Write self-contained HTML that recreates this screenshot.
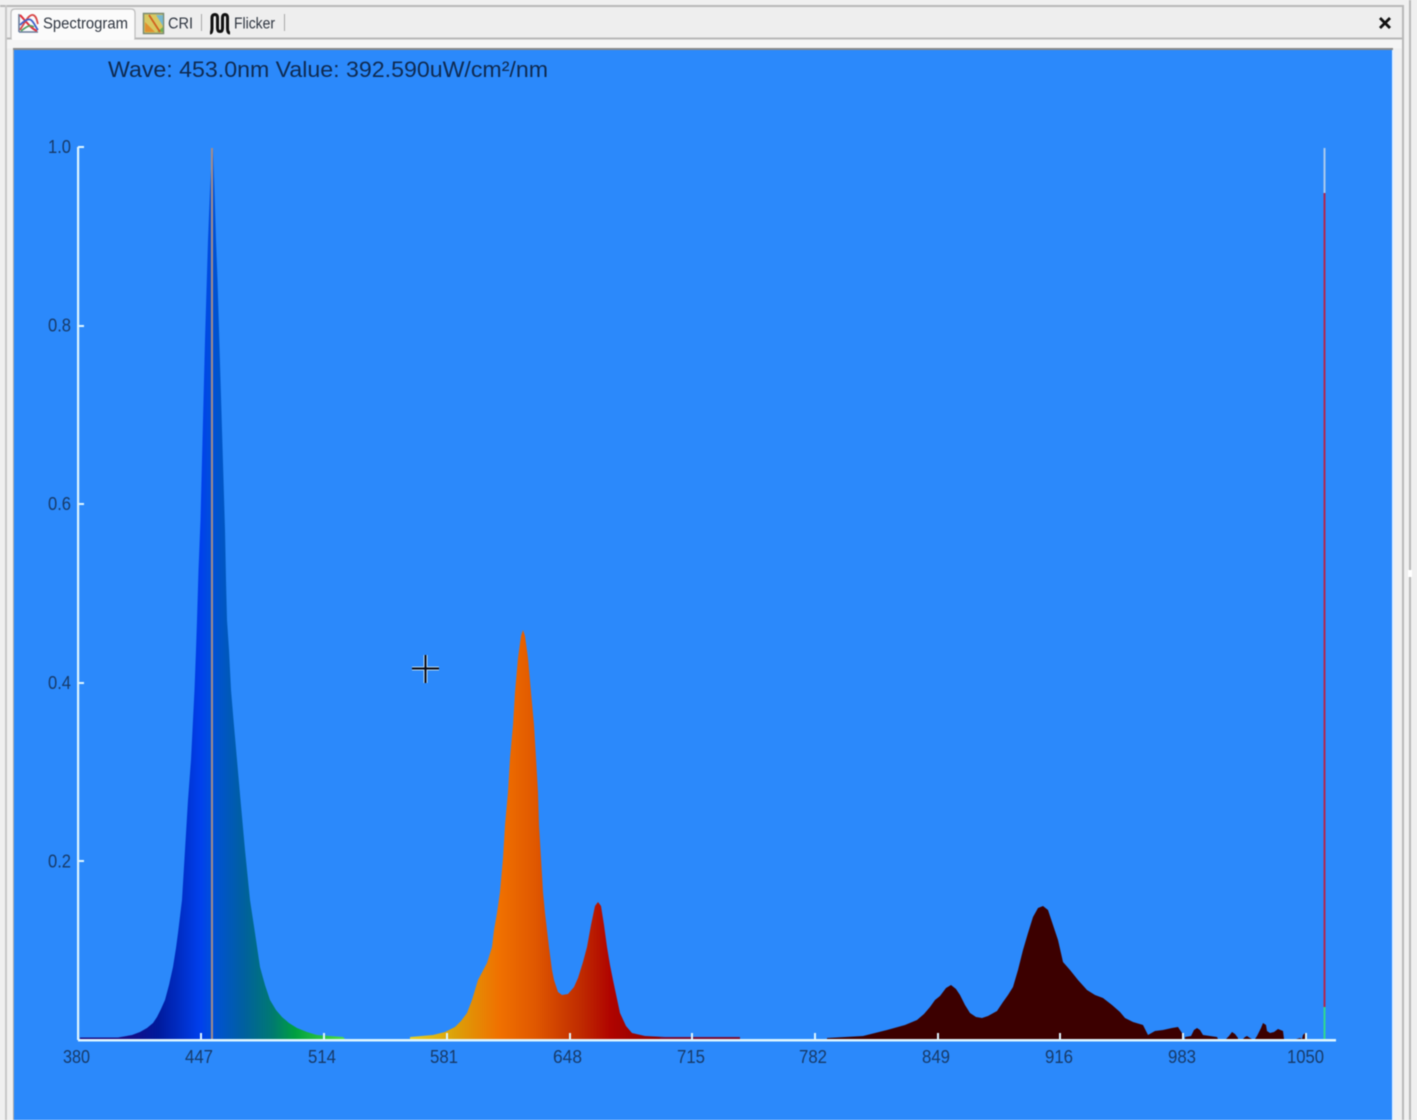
<!DOCTYPE html>
<html><head><meta charset="utf-8"><style>
html,body{margin:0;padding:0;background:#f0f0f0}
body{width:1417px;height:1120px;overflow:hidden;position:relative}
svg{position:absolute;left:0;top:0;filter:blur(.45px)}
text{font-family:"Liberation Sans",sans-serif}
.a{font-size:18.500px;fill:#173a68}
.t{font-size:15.500px;fill:#2e3540}
</style></head><body>
<svg width="1417" height="1120" viewBox="0 0 1417 1120">
<defs>
<linearGradient id="g1" gradientUnits="userSpaceOnUse" x1="120" y1="0" x2="345" y2="0">
<stop offset="0" stop-color="#1a0a80"/><stop offset=".17" stop-color="#001a9c"/><stop offset=".36" stop-color="#0040ee"/><stop offset=".41" stop-color="#0050d8"/><stop offset=".55" stop-color="#00609f"/><stop offset=".68" stop-color="#007a70"/><stop offset=".78" stop-color="#00a040"/><stop offset="1" stop-color="#50e040"/>
</linearGradient>
<linearGradient id="g2" gradientUnits="userSpaceOnUse" x1="410" y1="0" x2="660" y2="0">
<stop offset="0" stop-color="#e8d020"/><stop offset=".18" stop-color="#dca008"/><stop offset=".36" stop-color="#f07000"/><stop offset=".5" stop-color="#e05800"/><stop offset=".68" stop-color="#c02c00"/><stop offset=".8" stop-color="#b00400"/><stop offset="1" stop-color="#8c0000"/>
</linearGradient>
</defs>
<rect width="1417" height="1120" fill="#f0f0f0"/>
<rect x="0" y="5" width="1402" height="2" fill="#b8b8b8"/>
<rect x="5" y="5" width="2" height="1115" fill="#c8c8c8"/>
<rect x="1402" y="5" width="2" height="1115" fill="#b8b8b8"/>
<rect x="1409" y="0" width="2" height="1120" fill="#b8b8b8"/>
<rect x="1408" y="570" width="4" height="7" fill="#fff"/>
<rect x="7" y="7" width="1395" height="31" fill="#eeeeee"/>
<rect x="7" y="37.500" width="1395" height="2" fill="#b8b8b8"/>
<rect x="7" y="39.500" width="1395" height="9" fill="#f5f5f5"/>
<path d="M11 39V13q0-4 4-4H131q4 0 4 4V39" fill="#fbfbfb" stroke="#bcbcbc" stroke-width="1.200"/>
<rect x="12" y="36" width="122" height="4" fill="#fbfbfb"/>
<g fill="none" stroke-width="1.600">
<path d="M19 32V14" stroke="#667a99"/><path d="M19 32H38" stroke="#667a99"/>
<path d="M20 15C25 20 30 28 37 31" stroke="#e0303a" stroke-width="2"/>
<path d="M20 30C25 22 29 14 33 15S37 22 38 24" stroke="#d84848" stroke-width="1.800"/>
<path d="M20 25C24 21 28 18 31 20S36 28 38 30" stroke="#4060c8" stroke-width="1.800"/>
<path d="M21 31C26 27 30 24 34 27" stroke="#50a060"/>
</g>
<rect x="143.500" y="13.500" width="20" height="20" fill="#d8c860" stroke="#7a8a70" stroke-width="1.500"/>
<path d="M145 32V22L155 32z" fill="#e09030"/><path d="M163 15V26L156 15z" fill="#78b8d0"/>
<path d="M163 27V32H157z" fill="#70b050"/>
<path d="M149 15L160 32" stroke="#d06020" stroke-width="1.800" fill="none"/>
<path d="M210 33Q212 33 212 28V18Q212 14.500 215 14.500Q217.500 14.500 217.500 18V28Q217.500 31.500 220 31.500Q222.500 31.500 222.500 28V18Q222.500 14.500 225 14.500Q227.500 14.500 227.500 18V28Q227.500 33 230 33" fill="none" stroke="#111" stroke-width="3"/>
<text class="t" x="43" y="28.500" textLength="85" lengthAdjust="spacingAndGlyphs">Spectrogram</text>
<text class="t" x="168" y="28.500" textLength="25" lengthAdjust="spacingAndGlyphs">CRI</text>
<text class="t" x="234" y="28.500" textLength="41" lengthAdjust="spacingAndGlyphs">Flicker</text>
<rect x="201" y="14" width="1" height="17" fill="#a8a8a8"/>
<rect x="284" y="14" width="1" height="17" fill="#a8a8a8"/>
<path d="M1380 18L1390 28M1390 18L1380 28" stroke="#111" stroke-width="2.800"/>
<rect x="13" y="48" width="1380" height="2" fill="#8a8a8a"/>
<rect x="14" y="50" width="1378" height="1070" fill="#2b89fb"/>
<rect x="1392" y="50" width="2" height="1070" fill="#e2f0ff"/>
<rect x="13" y="50" width="1" height="1070" fill="#a8a8a8"/>
<text x="108" y="77" font-size="22.500" fill="#0f2a50" textLength="440" lengthAdjust="spacingAndGlyphs">Wave: 453.0nm Value: 392.590uW/cm²/nm</text>

<path fill="url(#g1)" d="M80 1039V1037.500H118L132 1035 140 1032 147 1028 153 1023 157 1017 161 1009 165 1000 169 985 173 967 176 948 178 933 182 900 185 850 188 800 191 760 193 720 194.500 690 196 650 197 620 198.500 570 200.500 520 202 460 203.500 400 205 340 206.500 290 208 240 210 190 212 148 213 148 214.500 190 216 240 217.500 280 219 330 220.500 380 222 430 223.500 480 225 530 226 580 227 620 229 650 231 690 233.500 720 237 760 240.500 800 245 850 250 900 255 933 260 967 265 985 270 1000 276 1010 282 1017 289 1023 297 1028 307 1032 317 1035 343 1037 345 1039z"/>
<path fill="url(#g2)" d="M410 1039V1037L433 1035 445 1032 455 1027 461 1021 467 1013 472 1000 478 980 487 963 492 947 494 930 497 913 500 892 503 858 505 825 508 792 510 758 513 725 515 692 518 658 521 636 523 630 525 636 528 658 531 692 534 725 536 758 538 792 539 825 541 858 543 892 545 913 549 947 552 970 554 980 558 992 562 995 568 994 574 987 578 978 583 962 587 947 591 925 595 906 598 902 601 906 604 925 607 947 610 965 613 980 620 1013 626 1026 632 1033 645 1036 665 1037 665 1039z"/>
<rect x="660" y="1037" width="80" height="2" fill="#7a0a30"/>
<path fill="#3c0000" d="M827 1039V1038L845 1037 863 1036 875 1033 887 1030 905 1025 917 1020 924 1014 930 1007 935 1000 940 996 946 988 951 985 956 989 960 995 965 1005 970 1013 976 1017 982 1018 988 1016 997 1011 1003 1002 1008 995 1013 987 1018 970 1023 950 1028 933 1033 917 1038 908 1043 906 1048 910 1053 925 1058 940 1063 962 1070 970 1078 980 1087 990 1095 995 1103 998 1112 1005 1120 1012 1125 1018 1133 1022 1143 1025 1148 1035 1155 1031 1163 1030 1172 1028 1178 1027 1182 1033 1183 1039H1185V1037L1191 1036 1194 1030 1197 1028 1200 1030 1203 1035 1217 1037 1218 1039H1226L1229 1036 1232 1032 1235 1034 1238 1038V1039H1243L1245 1037 1247 1036 1250 1038 1252 1039H1255L1257 1036 1259 1032 1261 1028 1263 1023 1266 1025 1267 1031 1270 1033 1274 1032 1278 1029 1283 1031 1284 1039H1296L1300 1038 1302 1039 1303 1035 1305 1033 1306 1039z"/>
<rect x="211" y="148" width="2" height="892" fill="#a38c8a"/>
<rect x="1323.500" y="148" width="2" height="45" fill="#a9c9ee"/>
<rect x="1323.500" y="193" width="2" height="814" fill="#b02850"/>
<rect x="1323.500" y="1007" width="2" height="32" fill="#30d890"/>
<g fill="#dff6ff">
<rect x="78" y="1039" width="1258" height="2.500"/>
<rect x="77" y="147" width="2.200" height="893"/>
<rect x="78" y="146" width="6" height="2"/><rect x="78" y="325" width="6" height="2"/><rect x="78" y="503" width="6" height="2"/><rect x="78" y="682" width="6" height="2"/><rect x="78" y="860" width="6" height="2"/>
<rect x="200" y="1033" width="2" height="6"/><rect x="323" y="1033" width="2" height="6"/><rect x="446" y="1033" width="2" height="6"/><rect x="569" y="1033" width="2" height="6"/><rect x="691" y="1033" width="2" height="6"/><rect x="814" y="1033" width="2" height="6"/><rect x="937" y="1033" width="2" height="6"/><rect x="1059" y="1033" width="2" height="6"/><rect x="1182" y="1033" width="2" height="6"/><rect x="1305" y="1033" width="2" height="6"/>
</g>
<text class="a" x="48" y="153" textLength="23" lengthAdjust="spacingAndGlyphs">1.0</text>
<text class="a" x="48" y="331.500" textLength="23" lengthAdjust="spacingAndGlyphs">0.8</text>
<text class="a" x="48" y="510" textLength="23" lengthAdjust="spacingAndGlyphs">0.6</text>
<text class="a" x="48" y="689" textLength="23" lengthAdjust="spacingAndGlyphs">0.4</text>
<text class="a" x="48" y="867.500" textLength="23" lengthAdjust="spacingAndGlyphs">0.2</text>
<text class="a" x="63" y="1063" textLength="27" lengthAdjust="spacingAndGlyphs">380</text>
<text class="a" x="185" y="1063" textLength="28" lengthAdjust="spacingAndGlyphs">447</text>
<text class="a" x="308" y="1063" textLength="28" lengthAdjust="spacingAndGlyphs">514</text>
<text class="a" x="430" y="1063" textLength="28" lengthAdjust="spacingAndGlyphs">581</text>
<text class="a" x="553" y="1063" textLength="29" lengthAdjust="spacingAndGlyphs">648</text>
<text class="a" x="677" y="1063" textLength="28" lengthAdjust="spacingAndGlyphs">715</text>
<text class="a" x="799" y="1063" textLength="28" lengthAdjust="spacingAndGlyphs">782</text>
<text class="a" x="922" y="1063" textLength="28" lengthAdjust="spacingAndGlyphs">849</text>
<text class="a" x="1045" y="1063" textLength="28" lengthAdjust="spacingAndGlyphs">916</text>
<text class="a" x="1168" y="1063" textLength="28" lengthAdjust="spacingAndGlyphs">983</text>
<text class="a" x="1287" y="1063" textLength="37" lengthAdjust="spacingAndGlyphs">1050</text>
<path d="M412 668.500H439M425.500 655V683" stroke="#b8dcf8" stroke-width="4"/>
<path d="M412 668.500H439M425.500 655V683" stroke="#0a0a14" stroke-width="2"/>
</svg>
</body></html>
